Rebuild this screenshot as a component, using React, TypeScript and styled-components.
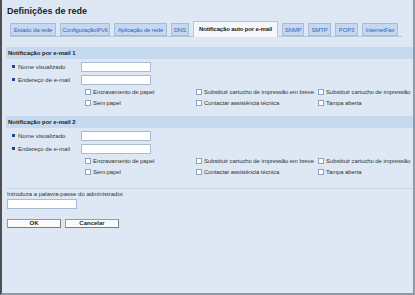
import styled, { createGlobalStyle } from "styled-components";

const GlobalStyle = createGlobalStyle`
  html, body {
    margin: 0;
    padding: 0;
    background: #dde8f4;
  }
`;

const Frame = styled.div`
  width: 415px;
  height: 295px;
  box-sizing: border-box;
  background: #dde8f4;
  border-left: 2px solid #4f4f4f;
  border-right: 2px solid #8f9aa6;
  border-bottom: 2px solid #8f9aa6;
  padding-left: 4px;
  font-family: "Liberation Sans", Arial, sans-serif;
  font-size: 6px;
  color: #2b2b2b;
  overflow: hidden;
`;

const Title = styled.h1`
  margin: 0 0 0 1px;
  padding-top: 5px;
  font-size: 9px;
  line-height: 12px;
  font-weight: bold;
  color: #1c1c1c;
`;

const TabBar = styled.div`
  display: flex;
  align-items: flex-end;
  gap: 4px;
  height: 15px;
  margin: 4px 11px 0 4px;
  border-bottom: 1px solid #b7c6d6;
`;

const Tab = styled.div<{ $active?: boolean; $width: number }>`
  box-sizing: border-box;
  width: ${(p) => p.$width}px;
  height: ${(p) => (p.$active ? "16px" : "13px")};
  line-height: ${(p) => (p.$active ? "15px" : "12px")};
  margin-bottom: ${(p) => (p.$active ? "-1px" : "0")};
  border: 1px solid ${(p) => (p.$active ? "#b7c6d6" : "#a7bcd8")};
  border-bottom: ${(p) => (p.$active ? "none" : "1px solid #a7bcd8")};
  background: ${(p) => (p.$active ? "#f4f7fb" : "#c5d8f1")};
  color: ${(p) => (p.$active ? "#1c1c1c" : "#3563b5")};
  font-weight: ${(p) => (p.$active ? "bold" : "normal")};
  text-align: center;
  letter-spacing: -0.15px;
  white-space: nowrap;
  overflow: hidden;
`;

const Content = styled.div`
  margin-top: 10px;
`;

const Section = styled.section`
  margin-bottom: 8px;
`;

const SectionHeader = styled.div`
  height: 12px;
  line-height: 12px;
  padding-left: 2px;
  background: #c5d9ef;
  font-weight: bold;
  color: #1c1c1c;
`;

const Fields = styled.div`
  margin-top: 1px;
`;

const FieldRow = styled.div`
  display: grid;
  grid-template-columns: 75px 70px;
  align-items: center;
  height: 13px;
`;

const Label = styled.div`
  display: flex;
  align-items: center;
  padding-left: 6px;
  position: relative;
  color: #333;
  white-space: nowrap;

  &::before {
    content: "";
    width: 3px;
    height: 3px;
    margin-right: 3px;
    background: #24469a;
  }

  &::after {
    content: ":";
    position: absolute;
    right: 1px;
    color: #b9c6d4;
  }
`;

const TextBox = styled.div<{ $width?: number }>`
  box-sizing: border-box;
  width: ${(p) => p.$width ?? 70}px;
  height: 10px;
  background: #ffffff;
  border: 1px solid #a8bbd2;
`;

const Checks = styled.div`
  display: grid;
  grid-template-columns: 111px 122px 1fr;
  grid-auto-rows: 11px;
  margin-left: 79px;
`;

const CheckItem = styled.label`
  display: flex;
  align-items: center;
  gap: 2px;
  color: #333;
  letter-spacing: -0.1px;
  white-space: nowrap;
`;

const Box = styled.span`
  box-sizing: border-box;
  width: 6px;
  height: 6px;
  flex-shrink: 0;
  background: #ffffff;
  border: 1px solid #8aa2be;
`;

const Rule = styled.hr`
  margin: 11px 0 0;
  border: none;
  border-top: 1px solid #c8d6e5;
  height: 0;
`;

const Prompt = styled.div`
  margin: 1px 0 0 1px;
  line-height: 8px;
  color: #333;
`;

const PasswordBox = styled(TextBox)`
  margin: 1px 0 0 1px;
`;

const Buttons = styled.div`
  display: flex;
  gap: 4px;
  margin: 10px 0 0 1px;
`;

const Button = styled.button`
  box-sizing: border-box;
  width: 54px;
  height: 9px;
  padding: 0;
  background: #fbfbfb;
  border: 1px solid #9a9a9a;
  border-right-color: #7d7d7d;
  border-bottom-color: #7d7d7d;
  font-family: inherit;
  font-size: 6px;
  line-height: 7px;
  font-weight: bold;
  color: #1c1c1c;
`;

const tabs: [string, number][] = [
  ["Estado da rede", 46],
  ["ConfiguraçãoIPv6", 50],
  ["Aplicação de rede", 53],
  ["DNS", 18],
  ["Notificação auto por e-mail", 85],
  ["SNMP", 22],
  ["SMTP", 23],
  ["POP3", 23],
  ["InternetFax", 36],
];

const checkLabels = [
  "Encravamento de papel",
  "Substituir cartucho de impressão em breve",
  "Substituir cartucho de impressão",
  "Sem papel",
  "Contactar assistência técnica",
  "Tampa aberta",
];

const EmailSection = ({ index }: { index: number }) => (
  <Section>
    <SectionHeader>Notificação por e-mail {index}</SectionHeader>
    <Fields>
      <FieldRow>
        <Label>Nome visualizado</Label>
        <TextBox />
      </FieldRow>
      <FieldRow>
        <Label>Endereço de e-mail</Label>
        <TextBox />
      </FieldRow>
    </Fields>
    <Checks>
      {checkLabels.map((label) => (
        <CheckItem key={label}>
          <Box />
          {label}
        </CheckItem>
      ))}
    </Checks>
  </Section>
);

export default function App() {
  return (
    <>
      <GlobalStyle />
      <Frame>
        <Title>Definições de rede</Title>
        <TabBar>
          {tabs.map(([t, w]) => (
            <Tab key={t} $width={w} $active={t === "Notificação auto por e-mail"}>
              {t}
            </Tab>
          ))}
        </TabBar>
        <Content>
          <EmailSection index={1} />
          <EmailSection index={2} />
        </Content>
        <Rule />
        <Prompt>Introduza a palavra-passe do administrador.</Prompt>
        <PasswordBox />
        <Buttons>
          <Button>OK</Button>
          <Button>Cancelar</Button>
        </Buttons>
      </Frame>
    </>
  );
}
